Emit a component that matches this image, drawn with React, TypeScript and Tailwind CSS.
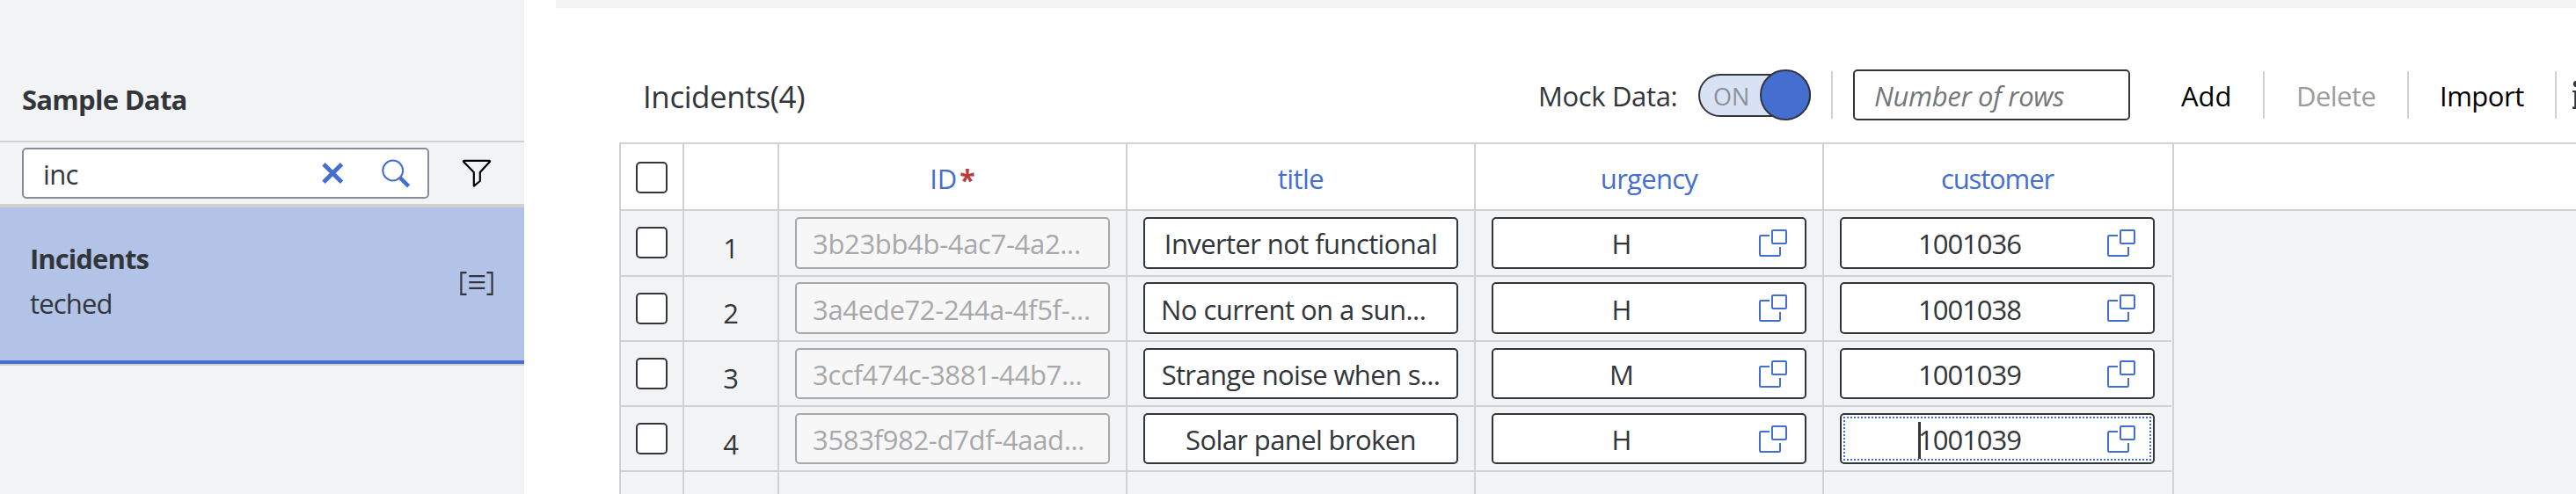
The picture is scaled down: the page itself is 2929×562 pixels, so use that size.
import type { ReactNode } from "react";

type Row = {
  n: string;
  id: string;
  title: string;
  titleClass: string;
  urgency: string;
  customer: string;
  height: string;
  field: string;
  check: string;
  num: string;
  focused?: boolean;
};

const rows: Row[] = [
  { n: "1", id: "3b23bb4b-4ac7-4a2...", title: "Inverter not functional", titleClass: "text-center tracking-[-0.6px]", urgency: "H", customer: "1001036", height: "h-[75px]", field: "mt-[7px] h-[59px] leading-[56px]", check: "mt-[18px]", num: "pt-[5px]" },
  { n: "2", id: "3a4ede72-244a-4f5f-...", title: "No current on a sun...", titleClass: "pl-[18px] tracking-[-0.53px]", urgency: "H", customer: "1001038", height: "h-[74px]", field: "mt-[6px] h-[59px] leading-[58px]", check: "mt-[18px]", num: "pt-[4px]" },
  { n: "3", id: "3ccf474c-3881-44b7...", title: "Strange noise when s...", titleClass: "text-center tracking-[-0.65px]", urgency: "M", customer: "1001039", height: "h-[74px]", field: "mt-[7px] h-[58px] leading-[56px]", check: "mt-[18px]", num: "pt-[4px]" },
  { n: "4", id: "3583f982-d7df-4aad...", title: "Solar panel broken", titleClass: "text-center tracking-[-0.61px]", urgency: "H", customer: "1001039", height: "h-[74px]", field: "mt-[7px] h-[58px] leading-[56px]", check: "mt-[18px]", num: "pt-[5px]", focused: true },
];

const line = "border-[#d1d1d1]";

function ValueHelpIcon() {
  return (
    <svg className="mt-[12px] h-[31px] w-8 shrink-0" viewBox="0 0 32 31" fill="none" stroke="#446fd1" strokeWidth="2">
      <rect x="15" y="1" width="16" height="15" rx="1" />
      <path d="M12 7H2.2Q1 7 1 8.2V28.8Q1 30 2.2 30H22.8Q24 30 24 28.8V20" />
    </svg>
  );
}

function Checkbox({ className }: { className: string }) {
  return <span className={`block h-9 w-9 rounded-[5px] border-2 border-[#32363a] bg-white ${className}`} />;
}

function LookupField({ value, row, focused }: { value: string; row: Row; focused?: boolean }) {
  return (
    <div className={`relative flex w-[358px] rounded-[5px] border-2 border-[#32363a] bg-white pr-5 ${row.field}`}>
      {focused && <span className="absolute inset-[2px] border-2 border-dotted border-[#446fd1]" />}
      <span className="flex-1 pr-[11px] text-center">
        <span className="relative tracking-[-0.98px]">
          {value}
          {focused && <span className="absolute left-0 top-[1px] h-[42px] w-[3px] bg-[#32363a]" />}
        </span>
      </span>
      <ValueHelpIcon />
    </div>
  );
}

function Sidebar() {
  return (
    <aside className="h-full w-[596px] shrink-0 bg-[#f2f3f5]">
      <div className={`h-[162px] border-b-2 ${line} pl-[25px] pt-[83px]`}>
        <h2 className="text-[31px] font-bold leading-[60px] tracking-[-0.72px]">Sample Data</h2>
      </div>
      <div className={`flex h-[74px] items-start border-b-4 ${line} pl-[25px] pt-[6px]`}>
        <div className="flex h-[58px] w-[463px] rounded-[5px] border-2 border-[#898c96] bg-white pl-[22px]">
          <span className="w-[316px] text-[31px] leading-[57px] tracking-[-0.7px]">inc</span>
          <svg className="mt-[13px] h-[28px] w-[28px] shrink-0" viewBox="0 0 28 28" stroke="#446fd1" strokeWidth="4.8">
            <path d="M3 3.7L23.6 24.3M23.6 3.7L3 24.3" />
          </svg>
          <svg className="ml-[40px] mt-[10px] h-[36px] w-[36px] shrink-0" viewBox="0 0 36 36" fill="none" stroke="#446fd1">
            <circle cx="13.7" cy="14" r="11.4" strokeWidth="2" />
            <path d="M21.8 22.2L31.6 31.8" strokeWidth="4.6" />
          </svg>
        </div>
        <svg className="ml-[36px] mt-[12px] h-[36px] w-[36px]" viewBox="0 0 36 36" fill="none" stroke="#000" strokeWidth="2.2" strokeLinejoin="round">
          <path d="M3.6 2.8H32.4Q33.6 3 32.9 4.1L21.8 16V26L14.8 31.6V16L3.1 4.1Q2.4 3 3.6 2.8Z" />
        </svg>
      </div>
      <div className="flex h-[178px] border-b-4 border-[#446fd1] bg-[#b3c3e8] pl-[34px] pr-[35px]">
        <div className="flex-1 pt-[33px] text-[31px]">
          <div className="font-bold leading-[50px] tracking-[-0.92px]">Incidents</div>
          <div className="leading-[52px] tracking-[-0.84px]">teched</div>
        </div>
        <svg className="mt-[73px] h-[28px] w-[38px]" viewBox="0 0 38 28" fill="none" stroke="#32363a" strokeWidth="2.2">
          <path d="M7.5 1.2H1.4V25.8H7.5M30.5 1.2H36.6V25.8H30.5M10.3 5.2H28.3M10.3 12.2H28.3M10.3 18.9H28.3" />
        </svg>
      </div>
      <div className={`border-b-2 ${line}`} />
    </aside>
  );
}

function Separator({ className }: { className: string }) {
  return <span className={`mt-[2px] h-[54px] w-[2px] shrink-0 bg-[#d1d1d1] ${className}`} />;
}

function Toolbar() {
  return (
    <div className="flex h-[83px] pl-[99px] text-[31px] leading-[60px]">
      <h1 className="w-[1018px] text-[35px] leading-[62px] tracking-[-0.43px]">Incidents(4)</h1>
      <span className="w-[182px] tracking-[-0.35px]">Mock Data:</span>
      <div className="relative mt-[5px] flex h-[49px] w-[128px] rounded-full border-2 border-[#32363a] bg-[#d9e2f5]">
        <span className="pl-[15px] text-[27px] leading-[47px] text-[#8d9197]">ON</span>
        <span className="absolute -right-[2px] -top-[7px] h-[58px] w-[58px] rounded-full border-2 border-[#32363a] bg-[#446fd1]" />
      </div>
      <Separator className="ml-[23px]" />
      <div className="ml-[23px] h-[58px] w-[315px] rounded-[5px] border-2 border-[#32363a] pl-[22px] italic leading-[56px] tracking-[-0.33px] text-[#74777a]">
        Number of rows
      </div>
      <span className="ml-[58px] w-[93px] shrink-0 text-black">Add</span>
      <Separator className="" />
      <span className="ml-[36px] w-[126px] shrink-0 tracking-[-0.54px] text-[#9c9c9c]">Delete</span>
      <Separator className="" />
      <span className="ml-[35px] w-[131px] shrink-0 tracking-[-0.5px] text-black">Import</span>
      <Separator className="" />
      <svg className="ml-[18px] mt-[13px] h-[34px] w-[4px] shrink-0" viewBox="0 0 4 34" fill="#32363a">
        <circle cx="4.4" cy="3.6" r="3.6" />
        <path d="M0 11H4V32H0V29.6H2.2V13H0Z" />
      </svg>
    </div>
  );
}

function HeaderCell({ children, className }: { children: ReactNode; className: string }) {
  return (
    <div className={`shrink-0 border-r-2 ${line} pt-[2px] text-center leading-[74px] text-[#446fd1] ${className}`}>
      {children}
    </div>
  );
}

function TableRow({ row }: { row: Row }) {
  const cell = `shrink-0 border-r-2 border-b-2 ${line}`;
  return (
    <div className={`flex ${row.height}`}>
      <div className={`w-[72px] pl-[17px] ${cell}`}>
        <Checkbox className={row.check} />
      </div>
      <div className={`w-[108px] text-center leading-[74px] ${cell} ${row.num}`}>{row.n}</div>
      <div className={`w-[396px] pl-[18px] ${cell}`}>
        <div className={`w-[358px] rounded-[5px] border-2 border-[#a7a8aa] bg-[#f7f7f7] pl-[18px] tracking-[-0.33px] text-[#a7a8aa] ${row.field}`}>
          {row.id}
        </div>
      </div>
      <div className={`w-[396px] pl-[18px] ${cell}`}>
        <div className={`w-[358px] rounded-[5px] border-2 border-[#32363a] bg-white ${row.titleClass} ${row.field}`}>
          {row.title}
        </div>
      </div>
      <div className={`w-[396px] pl-[18px] ${cell}`}>
        <LookupField value={row.urgency} row={row} />
      </div>
      <div className={`mr-[1px] w-[395px] shrink-0 border-b-2 pl-[18px] ${line}`}>
        <LookupField value={row.customer} row={row} focused={row.focused} />
      </div>
      <div className="w-[2px] shrink-0 bg-[#d1d1d1]" />
    </div>
  );
}

export default function App() {
  return (
    <div className="flex h-[562px] w-[2929px] overflow-hidden bg-white font-['Open_Sans','Noto_Sans',sans-serif] text-[#32363a]">
      <Sidebar />
      <main className="flex min-w-0 flex-1 flex-col pl-[36px]">
        <div className="h-[9px] shrink-0 bg-[#f2f3f5]" />
        <div className="h-[70px] shrink-0" />
        <Toolbar />
        <div className={`ml-[72px] flex h-[400px] shrink-0 flex-col border-l-2 border-t-2 ${line} text-[31px]`}>
          <div className={`flex h-[76px] shrink-0 border-b-2 ${line}`}>
            <div className={`w-[72px] shrink-0 border-r-2 ${line} pl-[17px] pt-[20px]`}>
              <Checkbox className="" />
            </div>
            <div className={`w-[108px] shrink-0 border-r-2 ${line}`} />
            <HeaderCell className="w-[396px]">
              ID<span className="relative top-[2px] ml-[3px] inline-block text-[32px] font-bold leading-none text-[#b73d3d]">*</span>
            </HeaderCell>
            <HeaderCell className="w-[396px] tracking-[-0.55px]">title</HeaderCell>
            <HeaderCell className="w-[396px] tracking-[-0.72px]">urgency</HeaderCell>
            <HeaderCell className="w-[398px] pr-[2px] tracking-[-1.16px]">customer</HeaderCell>
          </div>
          <div className="flex-1 bg-[#f2f3f5]">
            {rows.map((row) => (
              <TableRow key={row.n} row={row} />
            ))}
            <div className="flex h-[25px]">
              <div className={`w-[72px] shrink-0 border-r-2 ${line}`} />
              <div className={`w-[108px] shrink-0 border-r-2 ${line}`} />
              <div className={`w-[396px] shrink-0 border-r-2 ${line}`} />
              <div className={`w-[396px] shrink-0 border-r-2 ${line}`} />
              <div className={`w-[396px] shrink-0 border-r-2 ${line}`} />
              <div className={`w-[398px] shrink-0 border-r-2 ${line}`} />
            </div>
          </div>
        </div>
      </main>
    </div>
  );
}
